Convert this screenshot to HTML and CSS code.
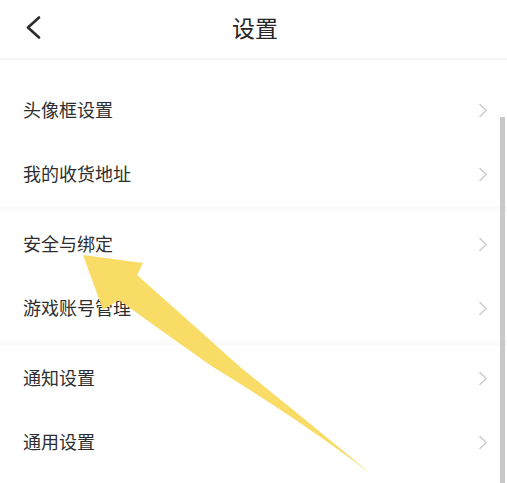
FILE: index.html
```html
<!DOCTYPE html>
<html lang="zh-CN">
<head>
<meta charset="utf-8">
<title>设置</title>
<link rel="stylesheet" href="styles.css">
</head>
<body>
<div class="page">
  <header class="header">
    <svg class="back" width="16" height="24" viewBox="0 0 16 24"><path d="M14 1.5 L3 11.5 L14 21.5" fill="none" stroke="#2b2b2b" stroke-width="2.6" stroke-linecap="round" stroke-linejoin="round"/></svg>
    <h1 class="title">设置</h1>
    <span class="spacer"></span>
  </header>
  <main class="list">
    <section class="group first">
      <div class="row"><span class="label">头像框设置</span><svg class="chev" width="10" height="15" viewBox="0 0 10 15"><path d="M1.5 1 L8 7.5 L1.5 14" fill="none" stroke="#cfcfcf" stroke-width="1.6"/></svg></div>
      <div class="row"><span class="label">我的收货地址</span><svg class="chev" width="10" height="15" viewBox="0 0 10 15"><path d="M1.5 1 L8 7.5 L1.5 14" fill="none" stroke="#cfcfcf" stroke-width="1.6"/></svg></div>
    </section>
    <section class="group">
      <div class="row"><span class="label">安全与绑定</span><svg class="chev" width="10" height="15" viewBox="0 0 10 15"><path d="M1.5 1 L8 7.5 L1.5 14" fill="none" stroke="#cfcfcf" stroke-width="1.6"/></svg></div>
      <div class="row"><span class="label">游戏账号管理</span><svg class="chev" width="10" height="15" viewBox="0 0 10 15"><path d="M1.5 1 L8 7.5 L1.5 14" fill="none" stroke="#cfcfcf" stroke-width="1.6"/></svg></div>
    </section>
    <section class="group">
      <div class="row"><span class="label">通知设置</span><svg class="chev" width="10" height="15" viewBox="0 0 10 15"><path d="M1.5 1 L8 7.5 L1.5 14" fill="none" stroke="#cfcfcf" stroke-width="1.6"/></svg></div>
      <div class="row"><span class="label">通用设置</span><svg class="chev" width="10" height="15" viewBox="0 0 10 15"><path d="M1.5 1 L8 7.5 L1.5 14" fill="none" stroke="#cfcfcf" stroke-width="1.6"/></svg></div>
    </section>
  </main>
  <div class="scrollbar"></div>
  <svg class="arrow" width="507" height="483" viewBox="0 0 507 483">
    <path d="M83 255 L143 263 L137 275 Q190 322 240 367 Q300 415 371 474 Q300 420 213 367 Q170 337 119 300 L103 310 Z" fill="#f9dc66"/>
  </svg>
</div>
</body>
</html>
```

FILE: styles.css
```css
html, body {
  margin: 0;
  padding: 0;
  background: #ffffff;
}

body {
  font-family: "Noto Sans CJK SC", "Noto Sans", sans-serif;
  color: #333333;
}

.page {
  position: relative;
  width: 507px;
  height: 483px;
  overflow: hidden;
  background: #ffffff;
}

.header {
  height: 58px;
  display: grid;
  grid-template-columns: 60px 1fr 60px;
  align-items: center;
  border-bottom: 2px solid #f4f4f4;
}

.back {
  margin-left: 25px;
  margin-top: -2px;
}

.title {
  margin: 0;
  text-align: center;
  font-size: 23px;
  font-weight: 400;
  color: #262626;
  line-height: 1;
  margin-top: -3px;
  padding-left: 3px;
}

.list {
  padding-top: 18px;
}

.group + .group {
  border-top: 6px solid #fbfbfb;
}

.row {
  height: 64px;
  display: flex;
  align-items: center;
  justify-content: space-between;
  padding: 0 19px 0 23px;
}

.label {
  font-size: 18px;
  line-height: 1;
  color: #2e2e2e;
  margin-top: -2px;
}

.chev {
  display: block;
}

.scrollbar {
  position: absolute;
  left: 500px;
  top: 117px;
  width: 5px;
  bottom: 0;
  background: #c8c8c8;
}

.arrow {
  position: absolute;
  left: 0;
  top: 0;
  pointer-events: none;
}
```
